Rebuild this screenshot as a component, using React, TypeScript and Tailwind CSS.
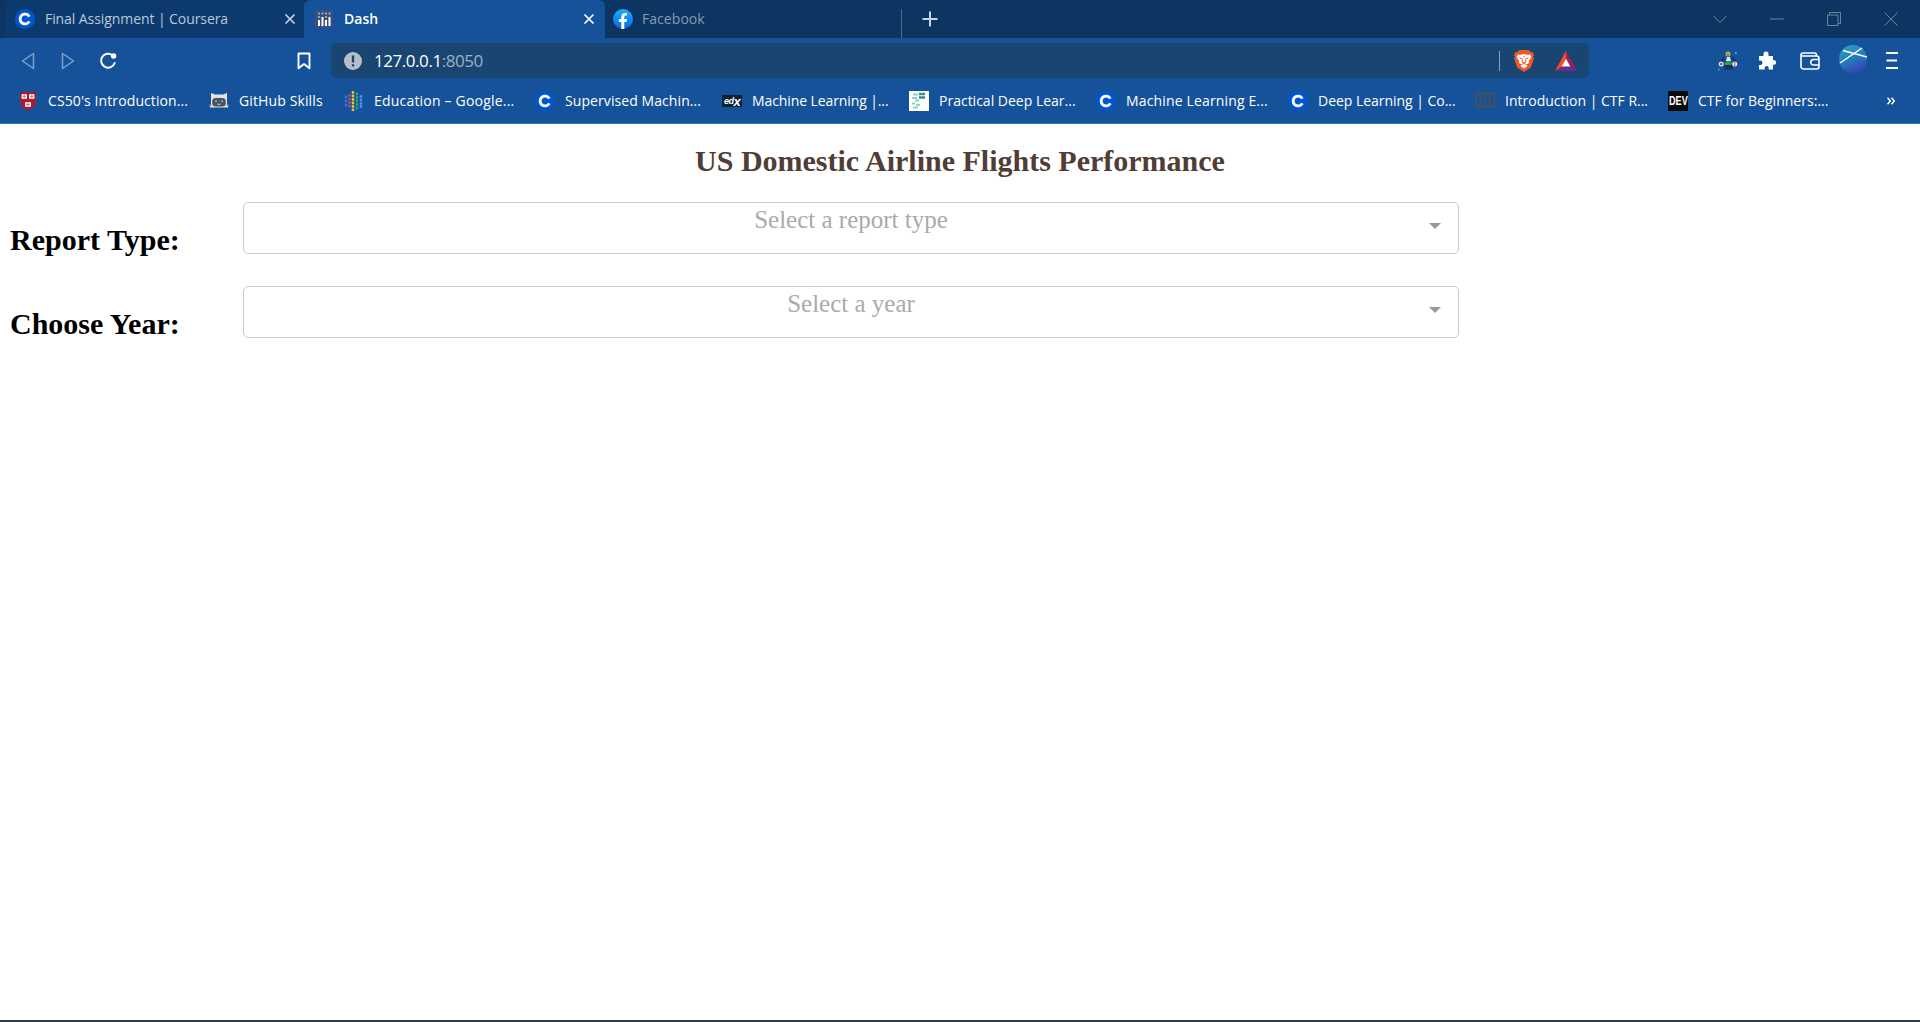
import React from "react";

const Coursera = () => (
  <svg viewBox="0 0 20 20" className="size-5 shrink-0">
    <circle cx="10" cy="10" r="10" fill="#0056d2" />
    <path d="M14.3 7.6A4.9 4.9 0 1 0 14.3 12.4" fill="none" stroke="#fff" strokeWidth="2.9" />
  </svg>
);

const Shield = () => (
  <svg viewBox="0 0 20 20" className="size-5 shrink-0">
    <path d="M2 1h16v9c0 5-4 8-8 9.500C6 18 2 15 2 10Z" fill="#a51c30" />
    <g fill="#ece4e4">
      <rect x="3.500" y="3" width="5.500" height="5" rx="1" />
      <rect x="11" y="3" width="5.500" height="5" rx="1" />
      <rect x="7" y="11" width="6" height="5" rx="1" />
    </g>
    <path d="M6.200 3v5M13.800 3v5M10 11v5M4.500 5.500h3.500M12 5.500h3.500M8 13.500h4" stroke="#a8737b" strokeWidth=".7" />
  </svg>
);

const Octocat = () => (
  <svg viewBox="0 0 20 20" className="size-5 shrink-0">
    <path d="M2 2l4 1.500h8L18 2v12l1.500 2H.5L2 14Z" fill="#dfe3ea" />
    <rect x="3.200" y="7" width="13.600" height="8.500" rx="3.500" fill="#49545f" />
    <path d="M6 10.500q1-1.500 2 0M12 10.500q1-1.500 2 0M8.500 13q1.500 1 3 0" stroke="#dfe3ea" fill="none" strokeWidth=".9" />
    <path d="M0 14h3M17 14h3M1 16.500h18" stroke="#9aa7b8" strokeWidth=".8" />
  </svg>
);

const dotColumns = [
  { x: 2, ys: [6, 10, 14], c: "#3f74d8" },
  { x: 5.5, ys: [4.5, 8, 11.5, 15], c: "#b54a6a" },
  { x: 9, ys: [1.5, 5, 8.5, 12, 15.5, 18.8], c: "#f4c430" },
  { x: 13, ys: [3, 6.5, 10, 13.5, 17], c: "#2fa866" },
  { x: 17, ys: [5.5, 9, 12.5, 15.5], c: "#4f8ff5" },
];
const Dots = () => (
  <svg viewBox="0 0 20 20" className="size-5 shrink-0">
    {dotColumns.map((d) => d.ys.map((y) => <circle key={`${d.x}-${y}`} cx={d.x} cy={y} r="1.400" fill={d.c} />))}
  </svg>
);

const Edx = () => (
  <span className="flex h-3 w-5 shrink-0 items-center justify-center bg-[#0b2633] font-['Liberation_Sans'] text-[9px] leading-none font-bold tracking-[-0.5px] text-white italic">
    ed<span className="text-[13px]">x</span>
  </span>
);

const FastAi = () => (
  <svg viewBox="0 0 20 20" className="size-5 shrink-0">
    <rect width="20" height="20" fill="#fff" />
    <path d="M10 3h6M10 6.500h6" stroke="#2f8f9a" strokeWidth="2.600" />
    <path d="M4 3.500h5M3 7h5M6 9.500h4M3 12.500h3M7 14h4M4 16.500h5" stroke="#8ed0c6" strokeWidth="1.800" />
  </svg>
);

const Book = () => (
  <svg viewBox="0 0 20 20" className="size-5 shrink-0" fill="none" stroke="#47505c" strokeWidth="1.800">
    <path d="M1 2.500h6q3 0 3 2 0-2 3-2h6v13h-6q-3 0-3 2 0-2-3-2H1ZM10 4.500v13M5.500 4.500v9M14.500 4.500v9" />
  </svg>
);

const Dev = () => (
  <span className="flex size-5 shrink-0 items-center justify-center bg-[#0a0a0a] text-white">
    <span className="scale-x-[0.76] font-['Liberation_Sans'] text-[12px] leading-none font-bold">DEV</span>
  </span>
);

const DashIcon = () => (
  <svg viewBox="0 0 18 18" className="h-[18px] w-[18px] shrink-0">
    <rect width="18" height="18" fill="#3c4f7c" />
    <g fill="#fff">
      <rect x="3" y="10" width="2" height="6" />
      <rect x="6.500" y="7" width="2" height="9" />
      <rect x="10" y="10" width="2" height="6" />
      <rect x="13.500" y="7" width="2" height="9" />
    </g>
    <g fill="#9fc6d8">
      <circle cx="4" cy="3.500" r="1" />
      <circle cx="4" cy="7" r="1" />
      <circle cx="7.500" cy="3.500" r="1" />
      <circle cx="11" cy="3.500" r="1" />
      <circle cx="11" cy="7" r="1" />
      <circle cx="14.500" cy="3.500" r="1" />
    </g>
  </svg>
);

const Facebook = () => (
  <svg viewBox="0 0 20 20" className="size-5 shrink-0">
    <defs>
      <linearGradient id="fb" x1="0" y1="0" x2="0" y2="1">
        <stop offset="0" stopColor="#19afff" />
        <stop offset="1" stopColor="#0866e0" />
      </linearGradient>
    </defs>
    <circle cx="10" cy="10" r="10" fill="url(#fb)" />
    <path d="M8.300 20v-7H5.900v-3h2.400V8c0-2.700 1.500-4 3.800-4 .9 0 1.900.2 1.900.2v2.400h-1.200c-1.100 0-1.500.7-1.500 1.500V10H14l-.4 3h-2.300v7Z" fill="#fff" />
  </svg>
);

const Close = ({ className }: { className: string }) => (
  <svg viewBox="0 0 12 12" className={className}>
    <path d="M1.500 1.500l9 9M10.500 1.500l-9 9" stroke="currentColor" strokeWidth="1.700" />
  </svg>
);

const bookmarks = [
  { icon: <Shield />, label: "CS50's Introduction...", w: "w-[191px]", t: "tracking-[0.1px]" },
  { icon: <Octocat />, label: "GitHub Skills", w: "w-[135px]", t: "tracking-[0.12px]" },
  { icon: <Dots />, label: "Education – Google...", w: "w-[191px]", t: "tracking-[0.2px]" },
  { icon: <Coursera />, label: "Supervised Machin...", w: "w-[187px]", t: "tracking-[0.08px]" },
  { icon: <Edx />, label: "Machine Learning |...", w: "w-[187px]", t: "tracking-[-0.1px]" },
  { icon: <FastAi />, label: "Practical Deep Lear...", w: "w-[187px]", t: "tracking-[0px]" },
  { icon: <Coursera />, label: "Machine Learning E...", w: "w-[192px]", t: "tracking-[0.15px]" },
  { icon: <Coursera />, label: "Deep Learning | Co...", w: "w-[187px]", t: "tracking-[-0.03px]" },
  { icon: <Book />, label: "Introduction | CTF R...", w: "w-[193px]", t: "tracking-[0px]" },
  { icon: <Dev />, label: "CTF for Beginners:...", w: "w-[190px]", t: "tracking-[0.02px]" },
];

const TabStrip = () => (
  <div className="flex h-[38px] bg-[#0c3561] pl-[5px] text-[14px]">
    <div className="flex w-[299px] items-center rounded-tl-[6px] bg-[#0d3a6e] pr-2 pl-[10px]">
      <Coursera />
      <span className="-mt-0.5 ml-[10px] tracking-[-0.08px] whitespace-nowrap text-[#b9c8da]">Final Assignment | Coursera</span>
      <Close className="ml-auto size-3 text-[#c8d3e0]" />
    </div>
    <div className="flex w-[301px] items-center rounded-t-[6px] bg-[#155299] pr-[10px] pl-[11px]">
      <DashIcon />
      <span className="-mt-0.5 ml-[11px] font-semibold text-white">Dash</span>
      <Close className="ml-auto size-3 text-white" />
    </div>
    <div className="flex w-[297px] items-center pl-2">
      <Facebook />
      <span className="-mt-0.5 ml-[9px] tracking-[0.05px] text-[#869ab3]">Facebook</span>
      <span className="mt-[9px] ml-auto h-[29px] w-px bg-[#496a8c]" />
    </div>
    <svg viewBox="0 0 16 16" className="mt-[11px] ml-[20px] size-4">
      <path d="M8 .5v15M.5 8h15" stroke="#c9d5e2" strokeWidth="2" />
    </svg>
    <div className="ml-auto flex items-center pr-[22px] pb-px text-[#6d86a3]">
      <svg viewBox="0 0 14 14" className="mr-[43px] size-[14px]" fill="none" stroke="currentColor">
        <path d="M.5 4L7 10.500 13.500 4" />
      </svg>
      <svg viewBox="0 0 14 14" className="mr-[43px] size-[14px]" fill="none" stroke="currentColor">
        <path d="M0 7h14" />
      </svg>
      <svg viewBox="0 0 14 14" className="mr-[43px] size-[14px]" fill="none" stroke="currentColor">
        <path d="M.5 3h10.500v10.500H.5ZM2.500 3V.5h11v11H11" />
      </svg>
      <svg viewBox="0 0 14 14" className="size-[14px]" fill="none" stroke="currentColor">
        <path d="M.5.5l13 13M13.500.5l-13 13" />
      </svg>
    </div>
  </div>
);

const AddressBar = () => (
  <div className="flex h-[35px] w-[1258px] items-center rounded-[5px] bg-[#194573] pl-[13px]">
    <svg viewBox="0 0 18 18" className="size-[18px]">
      <circle cx="9" cy="9" r="9" fill="#b6bec7" />
      <path d="M9 3.500v7M9 12.300v2.300" stroke="#1d446e" strokeWidth="2.300" />
    </svg>
    <span className="ml-3 text-[17px] leading-none tracking-[-0.45px] text-white">
      127.0.0.1<span className="text-[#9cb0c7]">:8050</span>
    </span>
    <span className="ml-auto h-5 w-px bg-[#8a9fb6]" />
    <svg viewBox="0 0 20 22" className="ml-[14px] h-[22px] w-5">
      <path d="M5.500 0h9l2 2 1.700-.3L20 5l-.7 2 .5 2-3 8.500L10 22l-6.800-4.500L.2 9l.5-2L0 5l1.800-3.300L3.500 2Z" fill="#f1562b" />
      <path d="M4 4.500l3 .3 3-.7 3 .7 3-.3 1.500 2.500-2.700 4 .3 2-3 1.500 1.500 1.500-3.600 2.500-3.600-2.500 1.500-1.500-3-1.500.3-2-2.700-4Z" fill="#fff" />
      <path d="M5.500 8l3 .8M14.500 8l-3 .8M10 6v1.500M8.500 9.500L8 12l2 1 2-1-.5-2.500M7.500 14.500l2.500-1 2.500 1" fill="none" stroke="#f1562b" strokeWidth="1" />
    </svg>
    <svg viewBox="0 0 22 20" className="mr-3 ml-[21px] h-5 w-[22px]">
      <path d="M11 0L0 20l7-4.500L11 8Z" fill="#ff4b24" />
      <path d="M11 0l11 20-7-4.500L11 8Z" fill="#9e1f63" />
      <path d="M0 20h22l-7-4.500H7Z" fill="#662d91" />
      <path d="M11 7.800l4.300 7.700H6.700Z" fill="#fff" />
    </svg>
  </div>
);

const Toolbar = () => (
  <div className="flex h-[45px] items-center px-[22px]">
    <svg viewBox="0 0 14 18" className="-ml-px h-[18px] w-[14px]">
      <path d="M12.500 1.500v15L1.500 9Z" fill="none" stroke="#7fa0c8" strokeWidth="1.500" strokeLinejoin="round" />
    </svg>
    <svg viewBox="0 0 14 18" className="ml-[26px] h-[18px] w-[14px]">
      <path d="M1.500 1.500v15l11-7.500Z" fill="none" stroke="#7fa0c8" strokeWidth="1.500" strokeLinejoin="round" />
    </svg>
    <svg viewBox="0 0 18 18" className="ml-[24px] size-[18px]">
      <path d="M13.500 3.200A7 7 0 1 0 15.700 11" fill="none" stroke="#fff" strokeWidth="2" strokeLinecap="round" />
      <circle cx="14.600" cy="4" r="2.700" fill="#fff" />
    </svg>
    <svg viewBox="0 0 14 18" className="ml-[180px] h-[18px] w-[14px]">
      <path d="M1.500 1.500h11v14.800L7 12l-5.500 4.300Z" fill="none" stroke="#fff" strokeWidth="1.900" strokeLinejoin="round" />
    </svg>
    <div className="ml-5">
      <AddressBar />
    </div>
    <svg viewBox="0 0 20 20" className="ml-auto size-5">
      <path d="M6 6l-4 7M14 6l4 6M5 12h10" stroke="#17324f" strokeWidth="2" />
      <circle cx="10" cy="3" r="2.500" fill="#c9b04a" />
      <circle cx="10" cy="3.600" r="1.200" fill="#3f83b5" />
      <path d="M9 6h3l1 4h-5Z" fill="#dceae7" />
      <path d="M6 12q4-4 9 0l-2 2H7Z" fill="#2f9563" />
      <path d="M6.500 14h8v4.500h-8Z" fill="#173259" />
      <circle cx="3.200" cy="13" r="2.500" fill="#e6dbe4" />
      <circle cx="3.200" cy="13" r="1.100" fill="#3c4660" />
      <circle cx="16.800" cy="13" r="2.500" fill="#f1e2e8" />
      <path d="M16.800 11v4" stroke="#d44a60" strokeWidth="1.100" />
      <circle cx="17.800" cy="2" r="1.200" fill="#3b93ec" />
      <circle cx="1" cy="18.500" r="1" fill="#3b93ec" />
    </svg>
    <svg viewBox="0 0 18 19" className="ml-[20px] h-[19px] w-[18px]">
      <path d="M1 5h4.500V3a2.500 2.500 0 0 1 5 0v2H15v4h.700a2.400 2.400 0 0 1 0 4.800H15V18.500h-4.300V17a2 2 0 0 0-4 0v1.500H1V14h1.300a2.200 2.200 0 0 0 0-4.400H1Z" fill="#fff" />
    </svg>
    <svg viewBox="0 0 20 18" className="ml-[24px] h-[18px] w-5" fill="none" stroke="#fff" strokeWidth="1.600">
      <path d="M16.500 4V3a2 2 0 0 0-2-2H3a2 2 0 0 0-2 2v11.500A2.500 2.500 0 0 0 3.500 17h13a2.500 2.500 0 0 0 2.500-2.500v-8A2.500 2.500 0 0 0 16.500 4H3A2 2 0 0 1 1 2.500M19 7.500h-5.500a2.500 2.500 0 0 0 0 5.500H19" />
    </svg>
    <svg viewBox="0 0 28 28" className="mb-[3px] ml-[19px] size-7">
      <defs>
        <linearGradient id="avatar" x1=".3" y1="0" x2=".75" y2="1">
          <stop offset="0" stopColor="#2e9fbc" />
          <stop offset=".55" stopColor="#2374bd" />
          <stop offset="1" stopColor="#4039ad" />
        </linearGradient>
      </defs>
      <circle cx="14" cy="14" r="14" fill="url(#avatar)" />
      <path d="M1 18L23 3M4 5.500L28 12" stroke="#fff" strokeWidth="1.500" />
    </svg>
    <svg viewBox="0 0 12 17" className="ml-[19px] h-[17px] w-3">
      <path d="M0 1h12M.5 8.500h10.500M0 16h12" stroke="#fff" strokeWidth="1.800" />
    </svg>
  </div>
);

const Dropdown = ({ placeholder }: { placeholder: string }) => (
  <div className="relative h-[52px] w-[1216px] rounded-[5px] border border-[#ccc] text-center text-[25px] leading-[34px] text-[#aaa]">
    {placeholder}
    <span className="absolute top-5 right-[17px] border-x-[6px] border-t-[6px] border-x-transparent border-t-[#999]" />
  </div>
);

const Field = ({ label, placeholder }: { label: string; placeholder: string }) => (
  <div className="flex h-[84px]">
    <h2 className="w-[233px] pt-[21px] text-[30px] leading-[34px] font-bold text-black">{label}</h2>
    <Dropdown placeholder={placeholder} />
  </div>
);

export default function App() {
  return (
    <div className="flex h-[1022px] w-[1920px] flex-col overflow-hidden bg-white">
      <header className="h-[124px] border-b border-[#3f73b0] bg-[#155299] font-['Open_Sans','Noto_Sans',sans-serif]">
        <TabStrip />
        <Toolbar />
        <nav className="flex h-[36px] items-center pl-[18px] text-[14px] text-white">
          {bookmarks.map((b) => (
            <div key={b.label} className={`flex shrink-0 items-center gap-[10px] ${b.w}`}>
              {b.icon}
              <span className={`-mt-0.5 whitespace-nowrap ${b.t}`}>{b.label}</span>
            </div>
          ))}
          <svg viewBox="0 0 8 8" className="ml-[29px] size-2" fill="none" stroke="#fff" strokeWidth="1.500">
            <path d="M.5.800L3.300 4 .5 7.200M4.500.800L7.300 4 4.500 7.200" />
          </svg>
        </nav>
      </header>
      <main className="flex-1 border-b-2 border-[#2f3944] px-[10px] font-['Liberation_Serif','Times_New_Roman',serif]">
        <h1 className="mt-5 mb-6 text-center text-[30px] leading-[34px] font-bold text-[#503d36]">
          US Domestic Airline Flights Performance
        </h1>
        <Field label="Report Type:" placeholder="Select a report type" />
        <Field label="Choose Year:" placeholder="Select a year" />
      </main>
    </div>
  );
}
